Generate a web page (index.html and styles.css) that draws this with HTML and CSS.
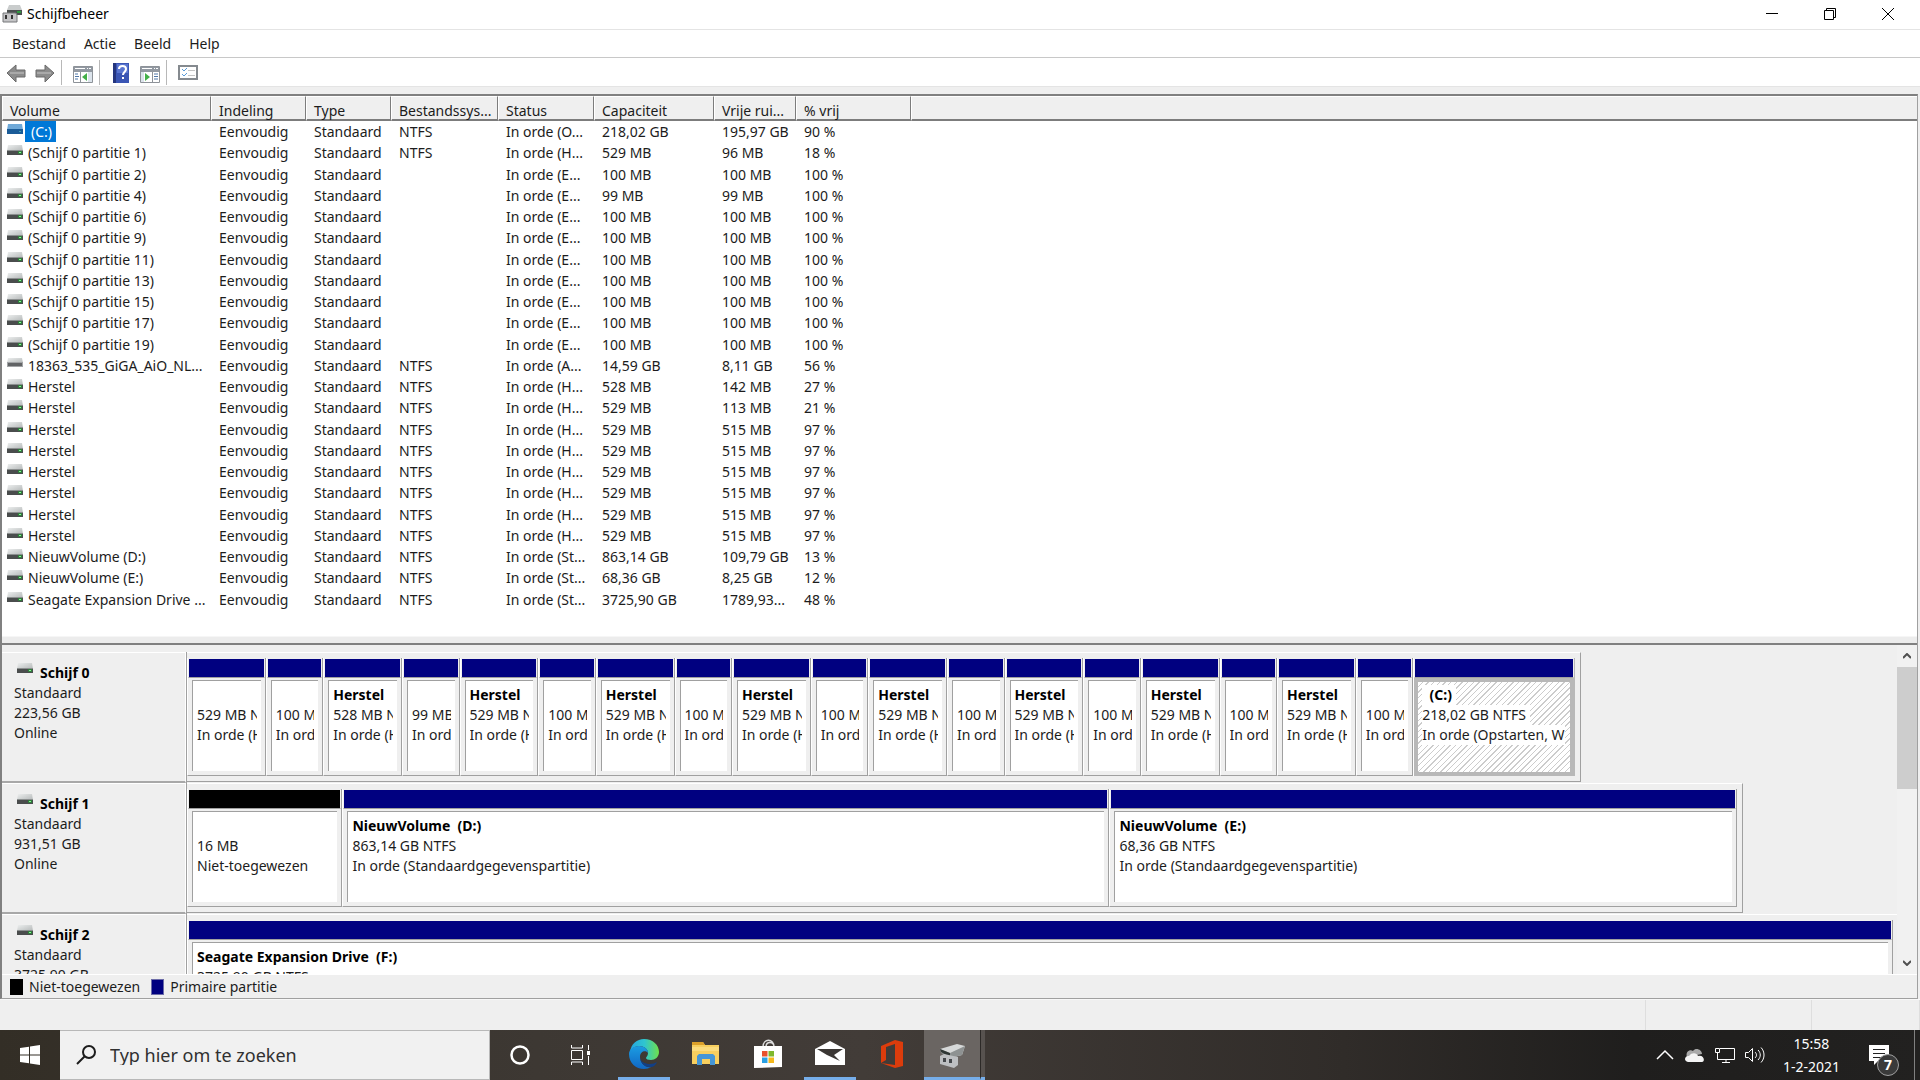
FILE: index.html
```
<!DOCTYPE html>
<html lang="nl">
<head>
    <meta charset="UTF-8">
    <meta name="viewport" content="width=device-width, initial-scale=1.0">
    <title>Schijfbeheer</title>
    <link rel="stylesheet" href="styles.css">
</head>
<body>
    <!-- Shared drive icons -->
    <svg class="symbols" aria-hidden="true">
        <linearGradient id="lid" x1="0" y1="0" x2="1" y2="1">
            <stop offset="0" stop-color="#eceeee"/>
            <stop offset="1" stop-color="#b4b8b8"/>
        </linearGradient>
        <symbol id="drive" viewBox="0 0 16 11">
            <path d="M1 0h14l1 6H0z" fill="url(#lid)"/>
            <path d="M0 5h16v5H0z" fill="#4a4d4d"/>
            <path d="M0 5h16v1H0z" fill="#8b8f8f"/>
            <path d="M11 6h4v3h-4z" fill="#2f7d3a"/>
            <path d="M12 7h2v1h-2z" fill="#8df09a"/>
        </symbol>
        <symbol id="drive-selected" viewBox="0 0 16 11">
            <path d="M1 0h14l1 6H0z" fill="#6fa9d8"/>
            <path d="M0 5h16v5H0z" fill="#1b5c98"/>
            <path d="M12 7h2v1h-2z" fill="#3fa0b0"/>
        </symbol>
        <symbol id="drive-removable" viewBox="0 0 16 11">
            <path d="M1 0h14l1 5H0z" fill="url(#lid)"/>
            <path d="M0 4h16v5H0z" fill="#a2a4a6"/>
            <path d="M1 5h14v3H1z" fill="#626466"/>
        </symbol>
    </svg>

    <header class="title-bar">
        <svg class="app-icon" viewBox="0 0 20 18">
            <path d="M7 0h11l2 5H5z" fill="#c9cccc"/>
            <path d="M5 5h15v5H5z" fill="#4b4f4f"/>
            <path d="M15 6h4v2h-4z" fill="#2f9a40"/>
            <path d="M1 8h13l1 2v7H1z" fill="#c4c4c6" stroke="#77797b"/>
            <path d="M3 10h2v4H3zM9 10h2v4H9z" fill="#333"/>
        </svg>
        <h1>Schijfbeheer</h1>
        <div class="window-buttons">
            <button aria-label="Minimaliseren"><svg viewBox="0 0 12 12"><path d="M0 5.500h12"/></svg></button>
            <button aria-label="Verkleinen"><svg viewBox="0 0 12 12"><path d="M.5 2.500h9v9h-9zM2.500 2.500v-2h9v9h-2"/></svg></button>
            <button aria-label="Sluiten"><svg viewBox="0 0 12 12"><path d="M0 0l12 12M12 0L0 12"/></svg></button>
        </div>
    </header>

    <nav class="menu-bar">
        <button>Bestand</button>
        <button>Actie</button>
        <button>Beeld</button>
        <button>Help</button>
    </nav>

    <div class="toolbar">
        <button aria-label="Vorige"><svg viewBox="0 0 20 20"><path d="M1 10l9-8v5h9v7h-9v5z" fill="#8c8c8c" stroke="#6a6a6a"/><path d="M4 10h14" stroke="#a9a9a9" stroke-width="2"/></svg></button>
        <button aria-label="Volgende"><svg viewBox="0 0 20 20"><path d="M19 10l-9-8v5H1v7h9v5z" fill="#8c8c8c" stroke="#6a6a6a"/><path d="M2 10h14" stroke="#a9a9a9" stroke-width="2"/></svg></button>
        <span class="separator"></span>
        <button aria-label="Consolestructuur"><svg viewBox="0 0 20 20">
            <path d="M.5 3.500h19v16H.5z" fill="#fff" stroke="#8d9298"/>
            <path d="M1 4h18v5H1z" fill="#9299a2"/><path d="M2 5h10v1H2zM14 5h1v1h-1zM16 5h2v1h-2z" fill="#fff"/>
            <path d="M7.500 9v10" stroke="#8d9298"/><path d="M2 11h3M2 13.500h4M2 16h3" stroke="#4f77a8"/>
            <path d="M14 10v8l-5-4z" fill="#43b049"/><path d="M15 9h4v10h-4z" fill="#dce4ec"/>
        </svg></button>
        <span class="separator"></span>
        <button aria-label="Help"><svg viewBox="0 0 20 20">
            <path d="M2 0h16v20H2z" fill="#3a55b4"/><path d="M2 0h3v20H2z" fill="#24357e"/><path d="M6 1h11v9H6z" fill="#5874cf"/>
            <path d="M8 6c0-4 7-4 7 0 0 3-3 3-3 6" fill="none" stroke="#fff" stroke-width="2"/><path d="M11 14h2v2h-2z" fill="#fff"/>
        </svg></button>
        <button aria-label="Actievenster"><svg viewBox="0 0 20 20">
            <path d="M.5 3.500h19v16H.5z" fill="#fff" stroke="#8d9298"/>
            <path d="M1 4h18v5H1z" fill="#9299a2"/><path d="M2 5h10v1H2zM14 5h1v1h-1zM16 5h2v1h-2z" fill="#fff"/>
            <path d="M12.500 9v10" stroke="#8d9298"/><path d="M14 11h4M14 13.500h4M14 16h4" stroke="#4f77a8"/>
            <path d="M5 10v8l5-4z" fill="#43b049"/><path d="M1 9h3v10H1z" fill="#dce4ec"/>
        </svg></button>
        <span class="separator"></span>
        <button aria-label="Eigenschappen"><svg viewBox="0 0 20 20">
            <path d="M1 3h18v13H1z" fill="#fff" stroke="#858a8f" stroke-width="2"/>
            <path d="M4 6l2 2 3-3M4 11l2 2 3-3" fill="none" stroke="#5a9bd8" stroke-width="1"/>
            <path d="M10 7.500h7M10 12.500h7" stroke="#c4c4c4"/>
        </svg></button>
    </div>

    <main class="console">
        <section class="volume-list">
            <table>
                <colgroup>
                    <col class="col-volume"><col class="col-layout"><col class="col-type"><col class="col-fs">
                    <col class="col-status"><col class="col-capacity"><col class="col-free"><col class="col-percent"><col>
                </colgroup>
                <thead>
                    <tr><th>Volume</th><th>Indeling</th><th>Type</th><th>Bestandssys...</th><th>Status</th><th>Capaciteit</th><th>Vrije rui...</th><th>% vrij</th><th></th></tr>
                </thead>
                <tbody>
                    <tr class="selected"><td><svg class="drive"><use href="#drive-selected"/></svg><span>(C:)</span></td><td>Eenvoudig</td><td>Standaard</td><td>NTFS</td><td>In orde (O...</td><td>218,02 GB</td><td>195,97 GB</td><td>90 %</td><td></td></tr>
                    <tr><td><svg class="drive"><use href="#drive"/></svg><span>(Schijf 0 partitie 1)</span></td><td>Eenvoudig</td><td>Standaard</td><td>NTFS</td><td>In orde (H...</td><td>529 MB</td><td>96 MB</td><td>18 %</td><td></td></tr>
                    <tr><td><svg class="drive"><use href="#drive"/></svg><span>(Schijf 0 partitie 2)</span></td><td>Eenvoudig</td><td>Standaard</td><td></td><td>In orde (E...</td><td>100 MB</td><td>100 MB</td><td>100 %</td><td></td></tr>
                    <tr><td><svg class="drive"><use href="#drive"/></svg><span>(Schijf 0 partitie 4)</span></td><td>Eenvoudig</td><td>Standaard</td><td></td><td>In orde (E...</td><td>99 MB</td><td>99 MB</td><td>100 %</td><td></td></tr>
                    <tr><td><svg class="drive"><use href="#drive"/></svg><span>(Schijf 0 partitie 6)</span></td><td>Eenvoudig</td><td>Standaard</td><td></td><td>In orde (E...</td><td>100 MB</td><td>100 MB</td><td>100 %</td><td></td></tr>
                    <tr><td><svg class="drive"><use href="#drive"/></svg><span>(Schijf 0 partitie 9)</span></td><td>Eenvoudig</td><td>Standaard</td><td></td><td>In orde (E...</td><td>100 MB</td><td>100 MB</td><td>100 %</td><td></td></tr>
                    <tr><td><svg class="drive"><use href="#drive"/></svg><span>(Schijf 0 partitie 11)</span></td><td>Eenvoudig</td><td>Standaard</td><td></td><td>In orde (E...</td><td>100 MB</td><td>100 MB</td><td>100 %</td><td></td></tr>
                    <tr><td><svg class="drive"><use href="#drive"/></svg><span>(Schijf 0 partitie 13)</span></td><td>Eenvoudig</td><td>Standaard</td><td></td><td>In orde (E...</td><td>100 MB</td><td>100 MB</td><td>100 %</td><td></td></tr>
                    <tr><td><svg class="drive"><use href="#drive"/></svg><span>(Schijf 0 partitie 15)</span></td><td>Eenvoudig</td><td>Standaard</td><td></td><td>In orde (E...</td><td>100 MB</td><td>100 MB</td><td>100 %</td><td></td></tr>
                    <tr><td><svg class="drive"><use href="#drive"/></svg><span>(Schijf 0 partitie 17)</span></td><td>Eenvoudig</td><td>Standaard</td><td></td><td>In orde (E...</td><td>100 MB</td><td>100 MB</td><td>100 %</td><td></td></tr>
                    <tr><td><svg class="drive"><use href="#drive"/></svg><span>(Schijf 0 partitie 19)</span></td><td>Eenvoudig</td><td>Standaard</td><td></td><td>In orde (E...</td><td>100 MB</td><td>100 MB</td><td>100 %</td><td></td></tr>
                    <tr><td><svg class="drive"><use href="#drive-removable"/></svg><span>18363_535_GiGA_AiO_NL...</span></td><td>Eenvoudig</td><td>Standaard</td><td>NTFS</td><td>In orde (A...</td><td>14,59 GB</td><td>8,11 GB</td><td>56 %</td><td></td></tr>
                    <tr><td><svg class="drive"><use href="#drive"/></svg><span>Herstel</span></td><td>Eenvoudig</td><td>Standaard</td><td>NTFS</td><td>In orde (H...</td><td>528 MB</td><td>142 MB</td><td>27 %</td><td></td></tr>
                    <tr><td><svg class="drive"><use href="#drive"/></svg><span>Herstel</span></td><td>Eenvoudig</td><td>Standaard</td><td>NTFS</td><td>In orde (H...</td><td>529 MB</td><td>113 MB</td><td>21 %</td><td></td></tr>
                    <tr><td><svg class="drive"><use href="#drive"/></svg><span>Herstel</span></td><td>Eenvoudig</td><td>Standaard</td><td>NTFS</td><td>In orde (H...</td><td>529 MB</td><td>515 MB</td><td>97 %</td><td></td></tr>
                    <tr><td><svg class="drive"><use href="#drive"/></svg><span>Herstel</span></td><td>Eenvoudig</td><td>Standaard</td><td>NTFS</td><td>In orde (H...</td><td>529 MB</td><td>515 MB</td><td>97 %</td><td></td></tr>
                    <tr><td><svg class="drive"><use href="#drive"/></svg><span>Herstel</span></td><td>Eenvoudig</td><td>Standaard</td><td>NTFS</td><td>In orde (H...</td><td>529 MB</td><td>515 MB</td><td>97 %</td><td></td></tr>
                    <tr><td><svg class="drive"><use href="#drive"/></svg><span>Herstel</span></td><td>Eenvoudig</td><td>Standaard</td><td>NTFS</td><td>In orde (H...</td><td>529 MB</td><td>515 MB</td><td>97 %</td><td></td></tr>
                    <tr><td><svg class="drive"><use href="#drive"/></svg><span>Herstel</span></td><td>Eenvoudig</td><td>Standaard</td><td>NTFS</td><td>In orde (H...</td><td>529 MB</td><td>515 MB</td><td>97 %</td><td></td></tr>
                    <tr><td><svg class="drive"><use href="#drive"/></svg><span>Herstel</span></td><td>Eenvoudig</td><td>Standaard</td><td>NTFS</td><td>In orde (H...</td><td>529 MB</td><td>515 MB</td><td>97 %</td><td></td></tr>
                    <tr><td><svg class="drive"><use href="#drive"/></svg><span>NieuwVolume (D:)</span></td><td>Eenvoudig</td><td>Standaard</td><td>NTFS</td><td>In orde (St...</td><td>863,14 GB</td><td>109,79 GB</td><td>13 %</td><td></td></tr>
                    <tr><td><svg class="drive"><use href="#drive"/></svg><span>NieuwVolume (E:)</span></td><td>Eenvoudig</td><td>Standaard</td><td>NTFS</td><td>In orde (St...</td><td>68,36 GB</td><td>8,25 GB</td><td>12 %</td><td></td></tr>
                    <tr><td><svg class="drive"><use href="#drive"/></svg><span>Seagate Expansion Drive ...</span></td><td>Eenvoudig</td><td>Standaard</td><td>NTFS</td><td>In orde (St...</td><td>3725,90 GB</td><td>1789,93...</td><td>48 %</td><td></td></tr>
                </tbody>
            </table>
        </section>

        <div class="splitter"></div>

        <section class="disk-view">
            <div class="disks">
                <div class="disk">
                    <div class="disk-label">
                        <h2><svg class="drive"><use href="#drive"/></svg>Schijf 0</h2>
                        <p>Standaard</p><p>223,56 GB</p><p>Online</p>
                    </div>
                    <div class="track">
                        <div class="partitions disk-0">
                            <div class="part recovery"><div class="bar"></div><div class="box"><b></b><p>529 MB N</p><p>In orde (H</p></div></div>
                            <div class="part efi"><div class="bar"></div><div class="box"><b></b><p>100 M</p><p>In ord</p></div></div>
                            <div class="part recovery"><div class="bar"></div><div class="box"><b>Herstel</b><p>528 MB N</p><p>In orde (H</p></div></div>
                            <div class="part efi"><div class="bar"></div><div class="box"><b></b><p>99 MB</p><p>In ord</p></div></div>
                            <div class="part recovery"><div class="bar"></div><div class="box"><b>Herstel</b><p>529 MB N</p><p>In orde (H</p></div></div>
                            <div class="part efi"><div class="bar"></div><div class="box"><b></b><p>100 M</p><p>In ord</p></div></div>
                            <div class="part recovery"><div class="bar"></div><div class="box"><b>Herstel</b><p>529 MB N</p><p>In orde (H</p></div></div>
                            <div class="part efi"><div class="bar"></div><div class="box"><b></b><p>100 M</p><p>In ord</p></div></div>
                            <div class="part recovery"><div class="bar"></div><div class="box"><b>Herstel</b><p>529 MB N</p><p>In orde (H</p></div></div>
                            <div class="part efi"><div class="bar"></div><div class="box"><b></b><p>100 M</p><p>In ord</p></div></div>
                            <div class="part recovery"><div class="bar"></div><div class="box"><b>Herstel</b><p>529 MB N</p><p>In orde (H</p></div></div>
                            <div class="part efi"><div class="bar"></div><div class="box"><b></b><p>100 M</p><p>In ord</p></div></div>
                            <div class="part recovery"><div class="bar"></div><div class="box"><b>Herstel</b><p>529 MB N</p><p>In orde (H</p></div></div>
                            <div class="part efi"><div class="bar"></div><div class="box"><b></b><p>100 M</p><p>In ord</p></div></div>
                            <div class="part recovery"><div class="bar"></div><div class="box"><b>Herstel</b><p>529 MB N</p><p>In orde (H</p></div></div>
                            <div class="part efi"><div class="bar"></div><div class="box"><b></b><p>100 M</p><p>In ord</p></div></div>
                            <div class="part recovery"><div class="bar"></div><div class="box"><b>Herstel</b><p>529 MB N</p><p>In orde (H</p></div></div>
                            <div class="part efi"><div class="bar"></div><div class="box"><b></b><p>100 M</p><p>In ord</p></div></div>
                            <div class="part system active"><div class="bar"></div><div class="box"><b>  (C:) </b><p>218,02 GB NTFS </p><p>In orde (Opstarten, W</p></div></div>
                        </div>
                    </div>
                </div>

                <div class="disk">
                    <div class="disk-label">
                        <h2><svg class="drive"><use href="#drive"/></svg>Schijf 1</h2>
                        <p>Standaard</p><p>931,51 GB</p><p>Online</p>
                    </div>
                    <div class="track">
                        <div class="partitions disk-1">
                            <div class="part unallocated"><div class="bar"></div><div class="box"><b></b><p>16 MB</p><p>Niet-toegewezen</p></div></div>
                            <div class="part data-d"><div class="bar"></div><div class="box"><b>NieuwVolume  (D:)</b><p>863,14 GB NTFS</p><p>In orde (Standaardgegevenspartitie)</p></div></div>
                            <div class="part data-e"><div class="bar"></div><div class="box"><b>NieuwVolume  (E:)</b><p>68,36 GB NTFS</p><p>In orde (Standaardgegevenspartitie)</p></div></div>
                        </div>
                    </div>
                </div>

                <div class="disk">
                    <div class="disk-label">
                        <h2><svg class="drive"><use href="#drive"/></svg>Schijf 2</h2>
                        <p>Standaard</p><p>3725,90 GB</p>
                    </div>
                    <div class="track">
                        <div class="partitions disk-2">
                            <div class="part"><div class="bar"></div><div class="box"><b>Seagate Expansion Drive  (F:)</b><p>3725,90 GB NTFS</p></div></div>
                        </div>
                    </div>
                </div>
            </div>
            <div class="scrollbar">
                <button aria-label="Omhoog"><svg viewBox="0 0 8 6"><path d="M0 5l4-4 4 4"/></svg></button>
                <div class="thumb"></div>
                <button aria-label="Omlaag"><svg viewBox="0 0 8 6"><path d="M0 1l4 4 4-4"/></svg></button>
            </div>
        </section>

        <div class="legend">
            <span class="swatch black"></span>Niet-toegewezen
            <span class="swatch blue"></span>Primaire partitie
        </div>
    </main>

    <div class="status-bar"><span></span><span></span><span></span></div>

    <footer class="taskbar">
        <button class="start" aria-label="Start"><svg viewBox="0 0 20 20"><path d="M0 3l9-1.300V9.500H0zM10 1.500L20 0v9.500H10zM0 10.500h9v7.800L0 17zM10 10.500h10V20l-10-1.500z" fill="#fff"/></svg></button>
        <label class="search">
            <svg viewBox="0 0 20 20"><circle cx="13" cy="7" r="6"/><path d="M8.500 11.500L1 19"/></svg>
            <input type="text" placeholder="Typ hier om te zoeken" aria-label="Zoeken">
        </label>
        <button aria-label="Cortana"><svg viewBox="0 0 30 30"><circle cx="15" cy="15" r="8.500" fill="none" stroke="#fff" stroke-width="2.500"/></svg></button>
        <button aria-label="Taakweergave"><svg viewBox="0 0 30 30"><path d="M6.500 10.500h11v9h-11zM6.500 5v3h11V5M6.500 25v-3h11v3M23.500 5v5M23.500 16v9" fill="none" stroke="#fff"/><path d="M22 11h3v4h-3z" fill="#fff"/></svg></button>
        <button class="app running" aria-label="Edge"><svg viewBox="0 0 30 30">
            <defs>
                <linearGradient id="edge-top" x1="0" y1="0" x2="1" y2="0"><stop offset="0" stop-color="#25a5e2"/><stop offset=".5" stop-color="#2fc5cf"/><stop offset="1" stop-color="#6fe04b"/></linearGradient>
                <linearGradient id="edge-left" x1="0" y1="0" x2="0" y2="1"><stop offset="0" stop-color="#1b9de2"/><stop offset="1" stop-color="#1167c4"/></linearGradient>
            </defs>
            <path d="M1 13C2 5 8 0 15 0c9 0 15 6 15 13 0 5-4 8-8 8-3 0-5-1-5-2s2-2 2-5c0-4-4-7-9-7-4 0-7 2-9 6z" fill="url(#edge-top)"/>
            <path d="M0 15C0 10 5 7 10 7c5 0 9 3 9 7-2-3-8-2-8 4 0 6 5 11 11 10-2 1-4 2-7 2C7 30 0 24 0 15z" fill="url(#edge-left)"/>
            <path d="M11 17c0 6 5 8 10 8 3 0 5-1 7-2-1 3-4 5-6 5-7 1-11-5-11-11z" fill="#123f86"/>
        </svg></button>
        <button class="app" aria-label="Verkenner"><svg viewBox="0 0 30 30">
            <path d="M1 3h11l2 3h14v19H1z" fill="#f7cf5f"/><path d="M1 3h11l2 3H1z" fill="#dba02a"/><path d="M1 8h27v4H1z" fill="#fbdc7d"/>
            <path d="M6 26V17l2-2h14l2 2v9h-5v-6h-8v6z" fill="#4596d6"/>
        </svg></button>
        <button class="app" aria-label="Store"><svg viewBox="0 0 30 30">
            <path d="M10 8c0-9 11-9 11 0M13 8c0-6 8-6 8 0" fill="none" stroke="#ddd" stroke-width="1.500"/>
            <path d="M1 7h28v21l-28 1z" fill="#fff"/>
            <path d="M9 12h5.500v5.500H9z" fill="#e8502c"/><path d="M15.500 12H21v5.500h-5.500z" fill="#7fb82c"/><path d="M9 18.500h5.500V24H9z" fill="#2aa0e4"/><path d="M15.500 18.500H21V24h-5.500z" fill="#f5b91c"/>
        </svg></button>
        <button class="app running" aria-label="Mail"><svg viewBox="0 0 30 30"><path d="M0 10l15-8 15 8v16H0z" fill="#fff"/><path d="M2 10h26l-9 6 6 6-13-6z" fill="#3b3734"/></svg></button>
        <button class="app" aria-label="Office"><svg viewBox="0 0 30 30"><path d="M4 7l14-6 8 2v24l-8 2-14-5 14 2V5l-9 3v13l-5 3z" fill="#dc3c0c"/></svg></button>
        <button class="app running current" aria-label="Schijfbeheer"><svg viewBox="0 0 30 30">
            <path d="M3 10l17-5 8 2-3 9-12 3z" fill="#d6d8d8"/><path d="M3 10l10 4 15-7-3 9-12 3-9-5z" fill="#8e9292"/><path d="M3 10l10 4v4l-9-5z" fill="#2e3634"/>
            <path d="M3 17l4-2 14 3v8l-4 3-14-4z" fill="#bdbfc2"/><path d="M6 19h3v4H6zM12 20h3v4h-3z" fill="#45484c"/>
        </svg></button>
        <span class="stack"></span>

        <div class="tray">
            <svg viewBox="0 0 20 20"><path d="M2 14l8-8 8 8" fill="none" stroke="#fff" stroke-width="1.500"/></svg>
            <svg viewBox="0 0 20 20"><path d="M2 12c-2-5 3-8 6-6 3-4 9-1 9 3z" fill="#a9a9a9"/><path d="M3 17c-5-1-3-7 1-6 3-4 8-3 9 0 5-2 8 5 4 6z" fill="#f4f4f4"/></svg>
            <svg viewBox="0 0 20 20"><path d="M5 3.500h14.500v11H2.500V8M11 15v3M7 17.500h8M.5 3.500h4v4h-4z" fill="none" stroke="#fff"/></svg>
            <svg viewBox="0 0 20 20"><path d="M.5 7.500h3l4-4v13l-4-4h-3zM10 7c2 2 2 4 0 6M13 5c3 3 3 7 0 10M16 2.500c4 4 4 11 0 15" fill="none" stroke="#fff"/></svg>
        </div>
        <div class="clock"><time>15:58</time><time>1-2-2021</time></div>
        <button class="notifications" aria-label="Meldingen">
            <svg viewBox="0 0 20 20"><path d="M0 0h20v16H9l-4 4v-4H0z" fill="#fff"/><path d="M4 4.500h12M4 8.500h12M4 12.500h8" stroke="#222"/></svg>
            <span class="badge">7</span>
        </button>
        <button class="show-desktop" aria-label="Bureaublad weergeven"></button>
    </footer>
</body>
</html>
```
FILE: styles.css
```
/* General */
* {
    box-sizing: border-box;
}

body {
    margin: 0;
    height: 100vh;
    display: flex;
    flex-direction: column;
    overflow: hidden;
    font-family: "Noto Sans", "Open Sans", sans-serif;
    font-size: 14px;
    line-height: 20px;
    color: #1c1c1c;
    background-color: #efefef;
}

h1, h2, p {
    margin: 0;
    font-size: 14px;
    font-weight: normal;
}

button {
    padding: 0;
    border: none;
    background: none;
    font: inherit;
    color: inherit;
}

svg {
    display: block;
    flex: none;
}

.symbols {
    position: absolute;
    width: 0;
    height: 0;
}

.drive {
    width: 16px;
    height: 11px;
}

/* Title bar */
.title-bar {
    display: flex;
    align-items: center;
    height: 30px;
    padding: 0 3px 1px 2px;
    background-color: #fff;
    border-bottom: 1px solid #e4e4e4;
}

.app-icon {
    width: 20px;
    height: 18px;
    margin-right: 5px;
}

.title-bar h1 {
    color: #000;
}

.window-buttons {
    display: flex;
    margin-left: auto;
}

.window-buttons button {
    display: flex;
    justify-content: center;
    align-items: center;
    width: 58px;
    height: 28px;
}

.window-buttons svg {
    width: 12px;
    height: 12px;
    fill: none;
    stroke: #000;
}

/* Menu and toolbar */
.menu-bar {
    display: flex;
    height: 28px;
    padding-left: 3px;
    background-color: #fff;
    border-bottom: 1px solid #c8c8c8;
}

.menu-bar button {
    padding: 0 9px;
}

.toolbar {
    display: flex;
    align-items: center;
    gap: 8px;
    height: 29px;
    padding: 1px 0 0 6px;
    background-color: #fff;
    border-bottom: 1px solid #e4e4e4;
}

.toolbar svg {
    width: 20px;
    height: 20px;
}

.toolbar button + button {
    margin-left: 1px;
}

.separator {
    width: 1px;
    height: 25px;
    margin-right: 3px;
    margin-left: -2px;
    background-color: #b8b8b8;
}

/* Console */
.console {
    flex: 1;
    min-height: 0;
    display: flex;
    flex-direction: column;
    margin: 7px 2px 0 0;
    border: 2px solid #808080;
    border-right: 1px solid #a0a0a0;
    border-bottom: 1px solid #a0a0a0;
}

.volume-list {
    background-color: #fff;
    padding-bottom: 26px;
}

.volume-list table {
    width: 100%;
    height: 514px;
    table-layout: fixed;
    border-collapse: separate;
    border-spacing: 0;
}

.col-volume { width: 209px; }
.col-layout { width: 95px; }
.col-type { width: 85px; }
.col-fs { width: 107px; }
.col-status { width: 96px; }
.col-capacity { width: 120px; }
.col-free { width: 82px; }
.col-percent { width: 115px; }

.volume-list th {
    height: 25px;
    padding: 5px 0 0 7px;
    line-height: 17px;
    font-weight: normal;
    text-align: left;
    white-space: nowrap;
    background-color: #efefef;
    border-top: 1px solid #fff;
    border-left: 1px solid #fff;
    border-right: 1px solid #7c7c7c;
    border-bottom: 2px solid #7c7c7c;
}

.volume-list th:last-child {
    border-right: none;
}

.volume-list td {
    padding: 0 0 0 8px;
    line-height: 21px;
    white-space: nowrap;
}

.volume-list td:first-child {
    display: flex;
    padding-left: 5px;
}

.volume-list .drive {
    margin-top: 3px;
}

.volume-list td span {
    padding: 0 3px 0 5px;
}

.volume-list .selected span {
    margin-left: 2px;
    padding: 0 4px 0 6px;
    color: #fff;
    background-color: #0078d7;
}

.splitter {
    height: 9px;
    background-color: #ececec;
    border-top: 1px solid #f6f6f6;
    border-bottom: 2px solid #808080;
}

/* Graphical disk view */
.disk-view {
    flex: 1;
    min-height: 0;
    display: flex;
}

.disks {
    flex: 1;
    min-width: 0;
    overflow: hidden;
    padding-top: 7px;
}

.disk {
    display: flex;
    height: 131px;
}

.disk-label {
    width: 184px;
    padding: 10px 0 0 12px;
    border-top: 1px solid #fff;
    border-right: 1px solid #fff;
    border-bottom: 2px solid #a8a8a8;
}

.disk-label h2 {
    display: flex;
    gap: 7px;
    padding-left: 3px;
    font-weight: bold;
    color: #000;
}

.track {
    flex: 1;
    min-width: 0;
    border-left: 1px solid #a0a0a0;
}

.partitions {
    display: flex;
    height: 130px;
    padding: 5px 5px 5px 0;
    border-top: 1px solid #fff;
    border-right: 1px solid #a0a0a0;
    border-bottom: 1px solid #a0a0a0;
}

/* Widths of the disks relative to the largest one */
.disk-0 { width: 81.5%; }
.disk-1 { width: 91%; }
.disk-2 { width: 100%; padding-right: 4px; border-right: none; }

.part {
    flex: 1 1 0;
    min-width: 0;
    display: flex;
    flex-direction: column;
    border-left: 1px solid #fff;
    border-right: 1px solid #a0a0a0;
    border-bottom: 1px solid #a0a0a0;
}

.recovery { flex-grow: 766; }
.efi { flex-grow: 553; }
.system { flex-grow: 1590; }
.unallocated { flex-grow: 154; }
.data-d { flex-grow: 768; }
.data-e { flex-grow: 628; }

.bar {
    height: 20px;
    border: 1px solid #efefef;
    border-bottom-color: #a0a0a0;
    background-color: #000080;
}

.unallocated .bar {
    background-color: #000;
}

.box {
    flex: 1;
    overflow: hidden;
    margin: 2px 4px 4px;
    padding: 4px 4px 0;
    background-color: #fff;
    border-top: 1px solid #a0a0a0;
    border-left: 1px solid #a0a0a0;
}

.box b,
.box p {
    display: block;
    height: 20px;
    overflow: hidden;
    white-space: pre;
}

.box b {
    color: #000;
}

.active {
    border-right-color: #b8b8b8;
    border-bottom: none;
}

.active .box {
    margin: 0;
    padding-top: 3px;
    border: 4px solid #b8b8b8;
    background-image: repeating-linear-gradient(135deg, #fff 0 3px, #ccc 3px 4px);
}

.active .box b,
.active .box p {
    width: fit-content;
    max-width: 100%;
    background-color: #fff;
}

.scrollbar {
    display: flex;
    flex-direction: column;
    width: 20px;
    background-color: #f1f1f1;
}

.scrollbar button {
    display: flex;
    justify-content: center;
    align-items: center;
    height: 22px;
}

.scrollbar button:last-child {
    margin-top: auto;
}

.scrollbar svg {
    width: 8px;
    height: 6px;
    fill: none;
    stroke: #505050;
    stroke-width: 2;
}

.thumb {
    height: 37%;
    background-color: #cdcdcd;
}

.legend {
    display: flex;
    align-items: center;
    height: 24px;
    padding-left: 8px;
    border-top: 1px solid #fff;
}

.swatch {
    width: 13px;
    height: 16px;
    margin-right: 6px;
}

.swatch.black {
    background-color: #000;
}

.swatch.blue {
    margin-left: 11px;
    background-color: #000080;
    border: 1px solid #6c6ca8;
}

.status-bar {
    display: flex;
    height: 31px;
    border-top: 1px solid #f8f8f8;
}

.status-bar span {
    width: 166px;
    border-right: 1px solid #dedede;
}

.status-bar span:first-child {
    flex: 1;
}

.status-bar span:last-child {
    width: 108px;
}

/* Taskbar */
.taskbar {
    display: flex;
    height: 50px;
    color: #fff;
    background: linear-gradient(90deg, #332e26 0%, #3d3833 28%, #423c38 45%, #302c29 70%, #1f1e1d 85%, #222120 100%);
}

.taskbar button {
    display: flex;
    justify-content: center;
    align-items: center;
    width: 60px;
}

.taskbar button svg {
    width: 30px;
    height: 30px;
}

.taskbar .start svg {
    width: 20px;
    height: 20px;
}

.search {
    display: flex;
    align-items: center;
    gap: 14px;
    width: 430px;
    padding-left: 16px;
    background-color: #f1f1f1;
    border: 1px solid #b8b8b8;
    border-left: none;
}

.search svg {
    width: 20px;
    height: 20px;
    fill: none;
    stroke: #1c1c1c;
    stroke-width: 2;
}

.search input {
    flex: 1;
    min-width: 0;
    padding: 0;
    border: none;
    outline: none;
    background: none;
    font: inherit;
    font-size: 18px;
}

.search input::placeholder {
    color: #303030;
    opacity: 1;
}

.taskbar .app {
    width: 52px;
    margin: 0 2px 0 8px;
    border-bottom: 3px solid transparent;
}

.taskbar .running {
    border-bottom-color: #76aeea;
}

.taskbar .current {
    width: 56px;
    margin: 0 0 0 4px;
    background-color: #6a6562;
}

.stack {
    width: 5px;
    border-left: 1px solid #2c2927;
    border-bottom: 3px solid #76aeea;
    background-color: #57524f;
}

.tray {
    display: flex;
    align-items: center;
    gap: 10px;
    margin-left: auto;
}

.tray svg {
    width: 20px;
    height: 20px;
}

.clock {
    display: flex;
    flex-direction: column;
    justify-content: center;
    width: 93px;
    line-height: 23px;
    text-align: center;
}

.taskbar .notifications {
    position: relative;
    width: 42px;
}

.taskbar .notifications svg {
    width: 20px;
    height: 20px;
}

.badge {
    position: absolute;
    right: 1px;
    bottom: 4px;
    width: 22px;
    height: 22px;
    border: 1px solid #a0a0a0;
    border-radius: 50%;
    background-color: #3a3a3a;
    font-weight: bold;
    line-height: 20px;
    text-align: center;
}

.taskbar .show-desktop {
    width: 6px;
    margin-left: 14px;
    border-left: 1px solid #808080;
}
```
